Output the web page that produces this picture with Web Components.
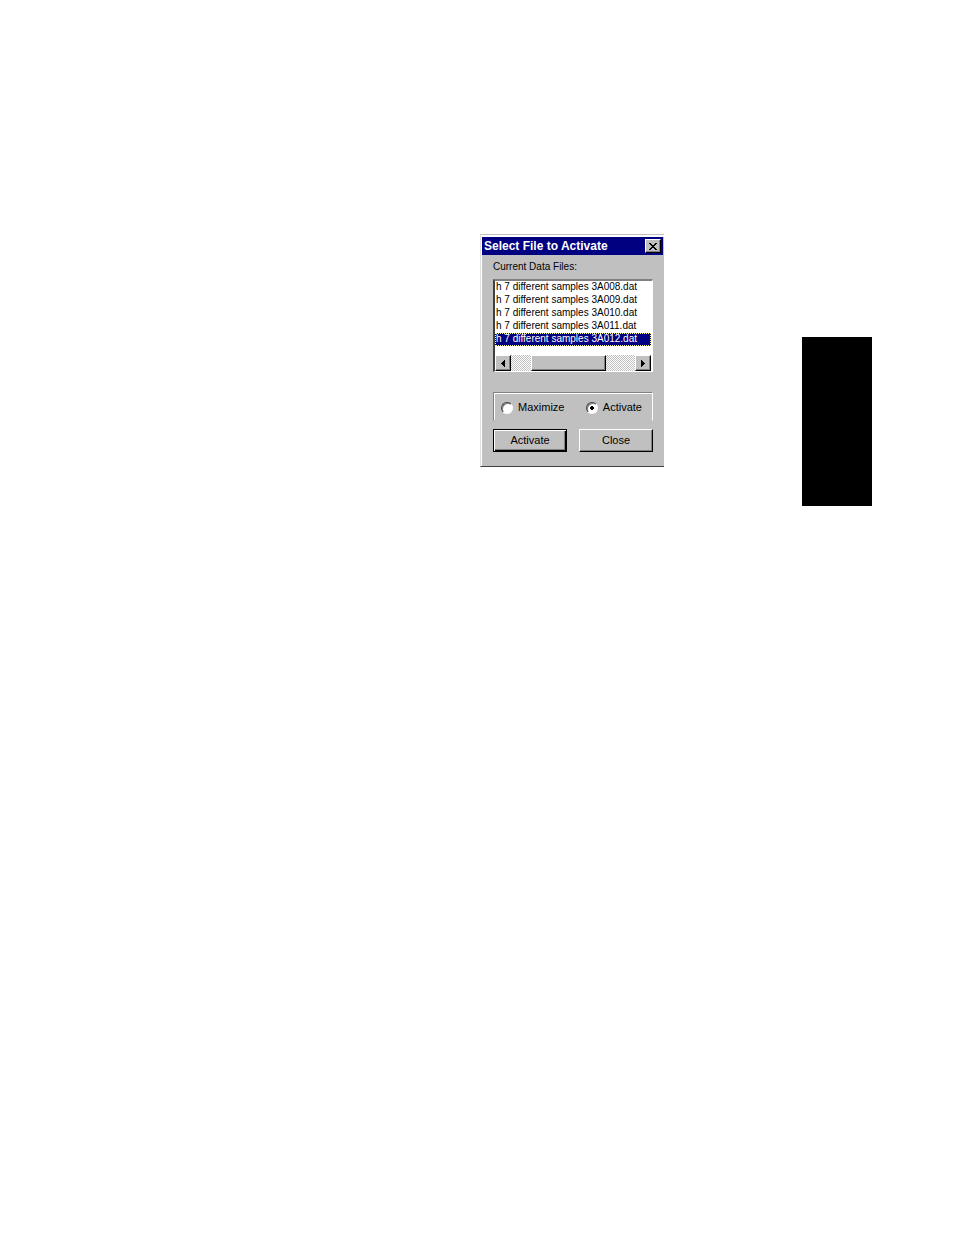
<!DOCTYPE html>
<html lang="en">
  <head>
    <meta charset="UTF-8" />
    <title>Select File to Activate</title>
    <style>
      body {
        margin: 0;
        background: #fff;
        color: #000;
        font: 11px/13px "Liberation Sans", Arial, sans-serif;
      }
    </style>
    <script>
      const define = (name, html, setup) => {
        customElements.define(
          name,
          class extends HTMLElement {
            constructor() {
              super();
              this.attachShadow({ mode: "open" }).innerHTML = html;
            }
            connectedCallback() {
              if (setup) setup(this, this.shadowRoot);
            }
          }
        );
      };

      define(
        "manual-page",
        `
          <style>
            :host {
              display: grid;
              grid-template-columns: 480fr 184px 138fr 70px 82fr;
              align-items: start;
              padding: 234px 0 40px;
            }
            ::slotted([slot="figure"]) { grid-column: 2; grid-row: 1; }
            ::slotted([slot="tab"]) { grid-column: 4; grid-row: 1; margin-top: 103px; }
          </style>
          <slot name="figure"></slot>
          <slot name="tab"></slot>
        `
      );

      define(
        "chapter-tab",
        `<style>:host { display: block; height: 169px; background: #000; }</style>`
      );

      define(
        "win-dialog",
        `
          <style>
            :host {
              display: block;
              box-sizing: border-box;
              background: #c0c0c0;
              border: 1px solid #dfdfdf;
              border-top-color: #c0c0c0;
              border-right: 0;
              border-bottom-color: #404040;
              box-shadow: inset 1px 2px #fff;
            }
            header {
              display: flex;
              align-items: center;
              justify-content: space-between;
              height: 18px;
              margin: 2px 1px 0;
              padding: 0 2px;
              background: #000080;
              color: #fff;
            }
            h1 { margin: 0; font-size: 12px; line-height: 18px; white-space: nowrap; }
            button {
              display: grid;
              place-items: center;
              width: 16px;
              height: 14px;
              padding: 0;
              background: #c0c0c0;
              border: 1px solid;
              border-color: #fff #000 #000 #fff;
              box-shadow: inset -1px -1px #808080;
            }
            main { display: block; padding: 5px 11px 14px 12px; }
          </style>
          <header>
            <h1></h1>
            <button type="button" aria-label="Close window">
              <svg width="8" height="7" viewBox="0 0 8 7" shape-rendering="crispEdges">
                <path d="M0 0h2v1H0zM6 0h2v1H6zM1 1h2v1H1zM5 1h2v1H5zM2 2h4v1H2zM3 3h2v1H3zM2 4h4v1H2zM1 5h2v1H1zM5 5h2v1H5zM0 6h2v1H0zM6 6h2v1H6z" />
              </svg>
            </button>
          </header>
          <main><slot></slot></main>
        `,
        (el, root) => {
          root.querySelector("h1").textContent = el.getAttribute("heading");
        }
      );

      define(
        "scroll-bar",
        `
          <style>
            :host {
              display: grid;
              grid-template-columns: 16px 20fr 75fr 29fr 16px;
              height: 16px;
              background: repeating-conic-gradient(#fff 0 25%, #c0c0c0 0 50%) 0 0 / 2px 2px;
            }
            button, .thumb {
              display: grid;
              place-items: center;
              padding: 0;
              background: #c0c0c0;
              border: 1px solid;
              border-color: #fff #000 #000 #fff;
              box-shadow: inset -1px -1px #808080;
            }
            .thumb { grid-column: 3; }
            .next { grid-column: 5; }
          </style>
          <button type="button" aria-label="Scroll left">
            <svg width="4" height="7" viewBox="0 0 4 7" shape-rendering="crispEdges">
              <path d="M3 0h1v7H3zM2 1h1v5H2zM1 2h1v3H1zM0 3h1v1H0z" />
            </svg>
          </button>
          <div class="thumb"></div>
          <button class="next" type="button" aria-label="Scroll right">
            <svg width="4" height="7" viewBox="0 0 4 7" shape-rendering="crispEdges">
              <path d="M0 0h1v7H0zM1 1h1v5H1zM2 2h1v3H2zM3 3h1v1H3z" />
            </svg>
          </button>
        `
      );

      define(
        "file-list",
        `
          <style>
            :host { display: block; font-size: 10px; }
            label { display: block; }
            .box {
              margin-top: 6px;
              background: #fff;
              border: 1px solid;
              border-width: 2px 1px 1px 2px;
              border-color: #808080 #fff #fff #404040;
              padding-right: 1px;
            }
            select {
              display: block;
              width: 100%;
              height: 74px;
              padding: 0;
              border: 0;
              outline: 0;
              border-radius: 0;
              background: #fff;
              color: #000;
              font: inherit;
              overflow: hidden;
            }
            option {
              height: 13px;
              min-height: 0;
              padding: 0 1px;
              box-sizing: border-box;
              line-height: 13px;
            }
            option:checked {
              background: linear-gradient(#000080, #000080);
              color: #fff;
              outline: 1px dotted #ffff80;
              outline-offset: -1px;
            }
          </style>
          <label for="files">Current Data Files:</label>
          <div class="box">
            <select id="files" size="5"></select>
            <scroll-bar></scroll-bar>
          </div>
        `,
        (el, root) => {
          const select = root.querySelector("select");
          for (const n of ["008", "009", "010", "011", "012"]) {
            select.add(new Option(`h 7 different samples 3A${n}.dat`));
          }
          select.selectedIndex = 4;
        }
      );

      define(
        "mode-group",
        `
          <style>
            :host { display: block; margin-top: 20px; }
            fieldset {
              display: flex;
              justify-content: space-between;
              min-width: 0;
              margin: 0;
              padding: 8px 10px 6px 7px;
              border: 1px solid;
              border-color: #808080 #fff transparent #808080;
              box-shadow: inset 1px 1px #fff;
            }
            label { display: flex; align-items: center; gap: 5px; }
            input {
              appearance: none;
              box-sizing: border-box;
              width: 12px;
              height: 12px;
              margin: 0;
              border: 1px solid;
              border-color: #404040 #fff #fff #404040;
              border-radius: 50%;
              background: #fff;
              box-shadow: inset 1px 1px #808080;
            }
            input:checked {
              background: radial-gradient(circle, #000 0 2px, #fff 2px);
            }
          </style>
          <fieldset aria-label="Mode">
            <label><input type="radio" name="mode" />Maximize</label>
            <label><input type="radio" name="mode" checked />Activate</label>
          </fieldset>
        `
      );

      define(
        "push-button",
        `
          <style>
            :host { display: block; }
            button {
              display: block;
              width: 100%;
              height: 23px;
              padding: 0;
              background: #c0c0c0;
              color: #000;
              font: inherit;
              border: 1px solid;
              border-color: #fff #000 #000 #fff;
              box-shadow: inset -1px -1px #808080;
            }
            :host([default]) button {
              border-color: #000;
              box-shadow: inset 1px 1px #fff, inset -1px -1px #000, inset -2px -2px #808080;
            }
          </style>
          <button type="button"><slot></slot></button>
        `
      );

      define(
        "button-row",
        `
          <style>
            :host {
              display: grid;
              grid-template-columns: 1fr 1fr;
              gap: 12px;
              margin-top: 8px;
            }
          </style>
          <slot></slot>
        `
      );
    </script>
  </head>
  <body>
    <manual-page>
      <win-dialog slot="figure" heading="Select File to Activate">
        <file-list></file-list>
        <mode-group></mode-group>
        <button-row>
          <push-button default>Activate</push-button>
          <push-button>Close</push-button>
        </button-row>
      </win-dialog>
      <chapter-tab slot="tab"></chapter-tab>
    </manual-page>
  </body>
</html>
